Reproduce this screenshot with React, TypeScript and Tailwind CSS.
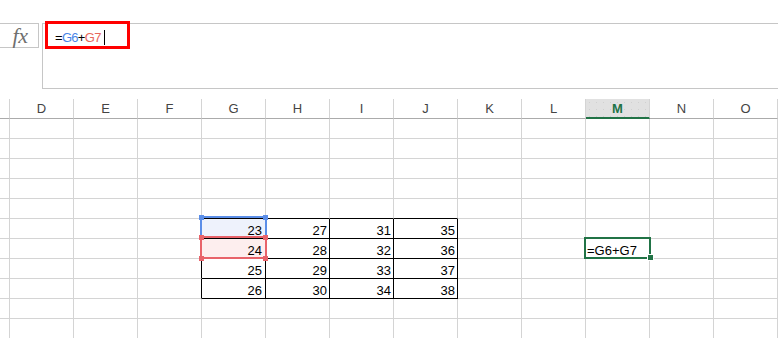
import React from "react";

const COLS = ["", "D", "E", "F", "G", "H", "I", "J", "K", "L", "M", "N", "O"];
const ROWS = 11;

function cellValue(r: number, c: number): string {
  if (r >= 5 && r <= 8 && c >= 4 && c <= 7) {
    return String(23 + (c - 4) * 4 + (r - 5));
  }
  if (r === 6 && c === 10) return "=G6+G7";
  return "";
}

function Cell({ r, c }: { r: number; c: number }) {
  const blackRight = r >= 5 && r <= 8 && c >= 3 && c <= 7;
  const blackBottom = r >= 4 && r <= 8 && c >= 4 && c <= 7;
  const rightCls = blackRight ? "border-r-black" : "border-r-[#d4d4d4]";
  const bottomCls = blackBottom ? "border-b-black" : "border-b-[#d4d4d4]";
  let bg = "bg-white";
  if (r === 5 && c === 4) bg = "bg-[#eef2fc]";
  if (r === 6 && c === 4) bg = "bg-[#fdeeee]";
  const v = cellValue(r, c);
  const isText = c === 10;
  const pad = c === 4 ? "pr-[3px]" : "pr-[2px]";
  return (
    <div
      className={`h-[20px] border-r border-b ${rightCls} ${bottomCls} ${bg} flex items-end leading-[15px] text-[13px] text-black ${
        isText ? "justify-start pl-[1px]" : `justify-end ${pad}`
      }`}
    >
      {v}
    </div>
  );
}

export default function App() {
  return (
    <div
      className="relative w-[778px] h-[338px] overflow-hidden bg-white"
      style={{ fontFamily: '"Liberation Sans", Arial, sans-serif' }}
    >
      {/* formula bar */}
      <div className="flex pt-[23px]">
        <div className="w-[39px] h-[25px] border border-l-0 border-[#c6c6c6] flex items-center justify-center">
          <span
            className="italic text-[22px] leading-[22px] text-[#6f6f6f] pl-[2px] tracking-[-0.5px]"
            style={{ fontFamily: '"Liberation Serif", "Times New Roman", serif' }}
          >
            fx
          </span>
        </div>
        <div className="ml-[3px] flex-1 h-[66px] border-l border-t border-b border-[#c6c6c6]">
          <div className="flex items-center h-[15px] mt-[6px] pl-[12px] text-[13px] leading-[15px] tracking-[-0.7px]">
            <span className="text-black">=</span>
            <span className="text-[#4a86e8]">G6</span>
            <span className="text-black">+</span>
            <span className="text-[#e8665c]">G7</span>
            <span className="ml-[3px] w-px h-[15px] bg-black" />
          </div>
        </div>
      </div>
      <div className="absolute left-[45px] top-[21px] w-[85px] h-[28px] border-[3px] border-[#ff0000]" />

      {/* sheet */}
      <div className="relative mt-[10px]">
        <div className="grid grid-cols-[10px_repeat(12,64px)]">
          {COLS.map((col, i) =>
            col === "M" ? (
              <div
                key={i}
                className="h-[20px] border-r border-r-[#d4d4d4] border-b-2 border-b-[#217346] bg-[#e1e1e1] bg-[radial-gradient(circle,#d0d0d0_0.6px,transparent_0.9px)] bg-[length:7px_7px] flex items-center justify-center text-[13px] leading-[15px] font-bold text-[#217346]"
              >
                {col}
              </div>
            ) : (
              <div
                key={i}
                className="h-[20px] border-r border-r-[#d4d4d4] border-b border-b-[#ababab] bg-white flex items-center justify-center text-[13px] leading-[15px] text-[#444444]"
              >
                {col}
              </div>
            )
          )}
          {Array.from({ length: ROWS }).map((_, r) =>
            COLS.map((_c, c) => <Cell key={`${r}-${c}`} r={r} c={c} />)
          )}
        </div>

        {/* reference highlight G6 (blue) */}
        <div className="absolute left-[200px] top-[117px] w-[67px] h-[22px] border-2 border-[#5b8ee8]" />
        <div className="absolute left-[199px] top-[116px] w-[5px] h-[5px] bg-[#5b8ee8]" />
        <div className="absolute left-[263px] top-[116px] w-[5px] h-[5px] bg-[#5b8ee8]" />
        {/* reference highlight G7 (red) */}
        <div className="absolute left-[200px] top-[137px] w-[67px] h-[23px] border-2 border-[#e8636a]" />
        <div className="absolute left-[199px] top-[136px] w-[5px] h-[5px] bg-[#e8636a]" />
        <div className="absolute left-[263px] top-[136px] w-[5px] h-[5px] bg-[#e8636a]" />
        <div className="absolute left-[199px] top-[157px] w-[5px] h-[5px] bg-[#e8636a]" />
        <div className="absolute left-[263px] top-[157px] w-[5px] h-[5px] bg-[#e8636a]" />

        {/* active cell M7 */}
        <div className="absolute left-[584px] top-[138px] w-[67px] h-[22px] border-2 border-[#217346]" />
        <div className="absolute left-[647px] top-[155px] w-[7px] h-[7px] bg-[#217346] border border-white" />
      </div>
    </div>
  );
}
